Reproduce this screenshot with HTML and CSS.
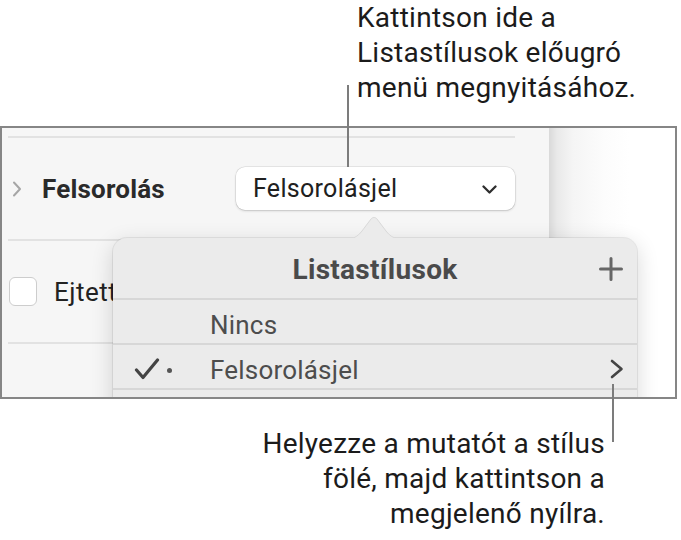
FILE: index.html
```html
<!DOCTYPE html>
<html lang="hu">
<head>
<meta charset="utf-8">
<title>Listastílusok</title>
<link rel="stylesheet" href="styles.css">
</head>
<body>
<div class="page">
  <div class="callout callout-top">Kattintson ide a<br>Listastílusok előugró<br>menü megnyitásához.</div>

  <div class="shot">
    <div class="sidebar">
      <div class="sep"></div>
      <div class="row">
        <svg class="disclosure" width="10" height="16" viewBox="0 0 10 16"><polyline points="2,1.5 8,8 2,14.5" fill="none" stroke="#a6a6a6" stroke-width="2" stroke-linecap="round" stroke-linejoin="round"/></svg>
        <span class="label">Felsorolás</span>
        <div class="select">
          <span>Felsorolásjel</span>
          <svg class="select-chev" width="15" height="10" viewBox="0 0 15 10"><polyline points="1.5,1.5 7.5,7.5 13.5,1.5" fill="none" stroke="#2e2e2e" stroke-width="2.3" stroke-linecap="round" stroke-linejoin="round"/></svg>
        </div>
      </div>
      <div class="sep"></div>
      <div class="row">
        <span class="checkbox"></span>
        <span class="check-label">Ejtett betű</span>
      </div>
      <div class="sep"></div>
    </div>
    <div class="doc"></div>

    <div class="popover">
      <svg class="pop-arrow" width="60" height="28" viewBox="0 0 60 28"><path d="M0 28 C10 28 13 26 18 20 L27 8 C28.5 6 31.5 6 33 8 L42 20 C47 26 50 28 60 28 Z" fill="#ebebeb" stroke="#d9d9d9" stroke-width="1"/><rect x="0" y="27" width="60" height="2" fill="#ebebeb"/></svg>
      <div class="pop-head">
        <span class="pop-title">Listastílusok</span>
        <svg class="plus" width="24" height="24" viewBox="0 0 24 24"><path d="M12 1.5 V22.5 M1.5 12 H22.5" stroke="#666" stroke-width="3" stroke-linecap="round"/></svg>
      </div>
      <div class="pop-row">
        <span class="mark"></span>
        <span class="pop-text">Nincs</span>
      </div>
      <div class="pop-row">
        <span class="mark">
          <svg width="26" height="22" viewBox="0 0 26 22"><path d="M2.5 12 L9 19.5 L23.5 2" fill="none" stroke="#444" stroke-width="3.2" stroke-linecap="round" stroke-linejoin="round"/></svg>
          <span class="dot"></span>
        </span>
        <span class="pop-text">Felsorolásjel</span>
        <svg class="pop-chev" width="14" height="20" viewBox="0 0 14 20"><polyline points="2,2 11.5,10 2,18" fill="none" stroke="#444" stroke-width="2.6" stroke-linecap="round" stroke-linejoin="round"/></svg>
      </div>
      <div class="pop-row"></div>
    </div>
  </div>

  <div class="callout callout-bottom">Helyezze a mutatót a stílus<br>fölé, majd kattintson a<br>megjelenő nyílra.</div>

  <div class="leader leader-top"></div>
  <div class="leader leader-bottom"></div>
</div>
</body>
</html>
```

FILE: styles.css
```css
* { box-sizing: border-box; }
html, body { margin: 0; padding: 0; background: #fff; }
body { font-family: Roboto, "Noto Sans", "Liberation Sans", sans-serif; }

.page {
  position: relative;
  width: 681px;
  height: 540px;
  overflow: hidden;
}

.callout {
  font-size: 28px;
  letter-spacing: 0.25px;
  color: #1b1b1b;
}
.callout-top {
  margin-left: 357px;
  line-height: 35px;
}
.callout-bottom {
  margin-top: 27px;
  width: 605px;
  text-align: right;
  line-height: 35px;
}

/* screenshot frame */
.shot {
  position: relative;
  margin-top: 21px;
  width: 677px;
  height: 273px;
  border: 2px solid #868686;
  display: flex;
  overflow: hidden;
}
.sidebar {
  width: 547px;
  background: #f6f6f6;
  padding: 8px 0 0 6px;
  display: flex;
  flex-direction: column;
}
.sep {
  width: 507px;
  height: 2px;
  background: #e2e2e2;
}
.row {
  height: 101px;
  display: flex;
  align-items: center;
  width: 507px;
}
.disclosure { margin-left: 4px; }
.label {
  margin-left: 20px;
  font-size: 26px;
  font-weight: 700;
  letter-spacing: 0.2px;
  color: #2a2a2a;
}
.select {
  margin-left: auto;
  width: 279px;
  height: 43px;
  border-radius: 9px;
  background: #fff;
  box-shadow: 0 0 0 0.5px rgba(0,0,0,0.12), 0 1px 2.5px rgba(0,0,0,0.16);
  display: flex;
  align-items: center;
  padding: 0 18px 0 17px;
  font-size: 25px;
  letter-spacing: 0.3px;
  color: #202020;
}
.select-chev { margin-left: auto; margin-top: 2px; }
.checkbox {
  margin-left: 1px;
  width: 28px;
  height: 29px;
  border-radius: 6px;
  background: #fff;
  border: 1px solid #cdcdcd;
}
.check-label {
  margin-left: 17px;
  font-size: 26px;
  letter-spacing: 0.5px;
  color: #222;
  white-space: nowrap;
}

.doc {
  flex: 1;
  background: linear-gradient(to right, #d9d9d9 0px, #e9e9e9 8px, #f5f5f5 24px, #fcfcfc 55px, #fff 80px);
}

/* popover menu */
.popover {
  position: absolute;
  left: 111px;
  top: 110px;
  width: 524px;
  height: 200px;
  background: #ebebeb;
  border-radius: 14px;
  box-shadow: 0 0 0 1px rgba(0,0,0,0.07), 0 6px 22px rgba(0,0,0,0.16);
}
.pop-arrow {
  position: absolute;
  left: 231px;
  top: -27px;
}
.pop-head {
  height: 62px;
  display: flex;
  align-items: center;
  justify-content: center;
  position: relative;
  border-bottom: 2px solid #d7d7d7;
}
.pop-title {
  font-size: 28px;
  font-weight: 700;
  letter-spacing: 0.3px;
  color: #4a4a4a;
  margin-top: 3px;
}
.plus {
  position: absolute;
  right: 14px;
  top: 19px;
}
.pop-row {
  height: 45px;
  border-bottom: 2px solid #d7d7d7;
  display: flex;
  align-items: center;
  font-size: 26px;
  letter-spacing: 0.2px;
  color: #4d4d4d;
}
.mark {
  width: 97px;
  padding-left: 21px;
  display: flex;
  align-items: center;
  margin-top: 4px;
}
.dot {
  width: 5px;
  height: 5px;
  border-radius: 50%;
  background: #555;
  margin-left: 7px;
  margin-top: 4px;
}
.pop-text { margin-top: 7px; }
.pop-chev { margin-left: auto; margin-right: 13px; margin-top: 5px; }

/* callout leader lines */
.leader {
  position: absolute;
  width: 2px;
  background: #7c7c7c;
}
.leader-top { left: 347px; top: 85px; height: 82px; }
.leader-bottom { left: 612px; top: 384px; height: 58px; }
```
